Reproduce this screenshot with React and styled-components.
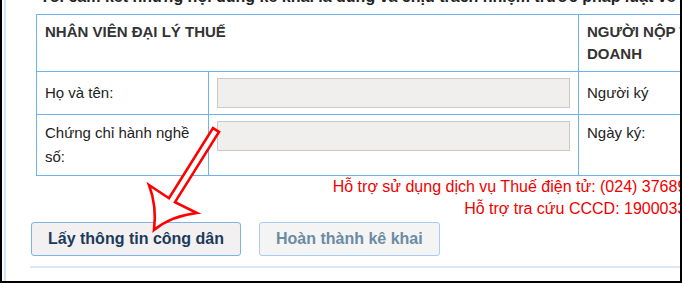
import React from 'react';
import styled, { createGlobalStyle } from 'styled-components';

const GlobalStyle = createGlobalStyle`
  html, body {
    margin: 0;
    padding: 0;
    background: #fff;
    overflow: hidden;
  }
  body {
    font-family: "Liberation Sans", Arial, sans-serif;
  }
`;

const Frame = styled.div`
  position: relative;
  width: 682px;
  height: 283px;
  box-sizing: border-box;
  border-left: 2px solid #000;
  border-right: 2px solid #000;
  border-bottom: 2px solid #000;
  overflow: hidden;
  background: #fff;
`;

const Panel = styled.div`
  margin-left: 2px;
  height: 100%;
  border-left: 2px solid #cfe5fa;
  padding-left: 24px;
  box-sizing: border-box;
`;

const Content = styled.div`
  width: 900px;
  display: flex;
  flex-direction: column;
`;

const TopNote = styled.div`
  height: 14px;
  overflow: hidden;
  padding-left: 10px;
`;

const TopNoteText = styled.div`
  margin-top: -12px;
  font-size: 16px;
  font-weight: bold;
  line-height: 18px;
  color: #222;
  white-space: nowrap;
`;

const Table = styled.table`
  margin-left: 6px;
  width: 842px;
  border-collapse: collapse;
  table-layout: fixed;
  font-size: 15px;
  color: #222;
`;

const HeadCell = styled.th`
  border: 1px solid #6db3ee;
  padding: 6px 8px;
  text-align: left;
  vertical-align: top;
  font-size: 15px;
  font-weight: bold;
  line-height: 22px;
  color: #333;
  height: 44px;
`;

const Cell = styled.td`
  border: 1px solid #6db3ee;
  padding: 6px 8px;
  line-height: 24px;
  vertical-align: ${p => p.$align || 'middle'};
`;

const Input = styled.div`
  height: 30px;
  box-sizing: border-box;
  background: #f1eeee;
  border: 1px solid #c9c9c9;
`;

const Support = styled.div`
  width: 683px;
  text-align: right;
  font-size: 16px;
  line-height: 22px;
  color: #f20000;
`;

const SupportLine = styled.div`
  white-space: nowrap;
`;

const Actions = styled.div`
  display: flex;
  gap: 18px;
  margin-top: 2px;
  margin-left: 1px;
`;

const Button = styled.button`
  height: 34px;
  padding: 0 16px;
  font-family: "Liberation Sans", Arial, sans-serif;
  font-size: 16px;
  font-weight: bold;
  border-radius: 3px;
  border: 1px solid ${p => (p.$disabled ? '#a8cdef' : '#7db2e6')};
  background: ${p => (p.$disabled ? '#f4f4f4' : '#f2f0f0')};
  color: ${p => (p.$disabled ? '#6b8ba3' : '#1c3a5c')};
  cursor: pointer;
`;

const Divider = styled.div`
  margin-top: 10px;
  height: 2px;
  background: #dbe9f6;
`;

const ArrowLayer = styled.svg`
  position: absolute;
  left: -2px;
  top: 0;
  pointer-events: none;
`;

const PointerArrow = () => (
  <ArrowLayer width="682" height="283" viewBox="0 0 682 283">
    <path
      d="M154,230 Q171,216 197,213 L175,202.1 L219,131.9 L213,128.1 L169,198.3 L149,185 Q157,206 154,230 Z"
      fill="#fff"
      stroke="#f00"
      strokeWidth="2.6"
      strokeLinejoin="miter"
    />
  </ArrowLayer>
);

const App = () => {
  return (
    <>
      <GlobalStyle />
      <Frame>
        <Panel>
          <Content>
            <TopNote>
              <TopNoteText>
                Tôi cam kết những nội dung kê khai là đúng và chịu trách nhiệm trước pháp luật về những nội dung đã khai.
              </TopNoteText>
            </TopNote>
            <Table>
              <colgroup>
                <col style={{ width: 172 }} />
                <col style={{ width: 370 }} />
                <col />
              </colgroup>
              <tbody>
                <tr>
                  <HeadCell colSpan={2}>NHÂN VIÊN ĐẠI LÝ THUẾ</HeadCell>
                  <HeadCell>
                    NGƯỜI NỘP THUẾ HOẶC HỘ KINH
                    <br />
                    DOANH
                  </HeadCell>
                </tr>
                <tr>
                  <Cell>Họ và tên:</Cell>
                  <Cell><Input /></Cell>
                  <Cell>Người ký</Cell>
                </tr>
                <tr>
                  <Cell $align="top">Chứng chỉ hành nghề số:</Cell>
                  <Cell $align="top"><Input /></Cell>
                  <Cell $align="top">Ngày ký:</Cell>
                </tr>
              </tbody>
            </Table>
            <Support>
              <SupportLine>Hỗ trợ sử dụng dịch vụ Thuế điện tử: (024) 37689679</SupportLine>
              <SupportLine>Hỗ trợ tra cứu CCCD: 1900033906</SupportLine>
            </Support>
            <Actions>
              <Button>Lấy thông tin công dân</Button>
              <Button $disabled>Hoàn thành kê khai</Button>
            </Actions>
            <Divider />
          </Content>
        </Panel>
        <PointerArrow />
      </Frame>
    </>
  );
};

export default App;
